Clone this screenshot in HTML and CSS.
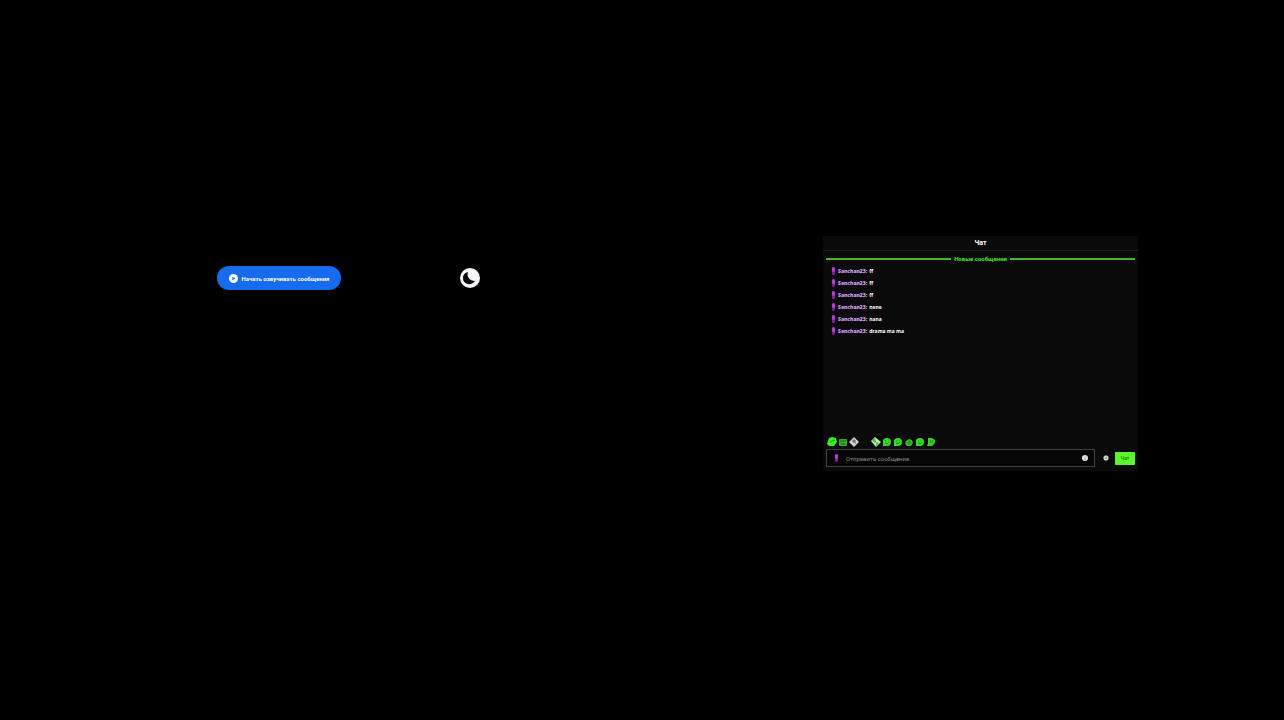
FILE: index.html
```html
<!DOCTYPE html>
<html lang="ru">
<head>
  <meta charset="UTF-8"/>
  <title>Чат</title>
  <meta name="viewport" content="width=device-width, initial-scale=1.0"/>
  <link rel="stylesheet" href="styles.css">
</head>
<body>
  <svg class="sprite" aria-hidden="true">
    <symbol id="mic" viewBox="0 0 6 10">
      <rect x="1" y="0" width="4" height="7" rx="2" fill="#b93ad6"/>
      <path d="M1 6h4v2L4 10H2L1 8z" fill="#7c1c9b"/>
    </symbol>
    <symbol id="blob" viewBox="0 0 10 10">
      <path d="M1 3Q2 1 5 1q4 0 4 4 0 4-4 4H1V6z" fill="#39d824"/>
      <path d="M3 4h1M6 3h1M3 6l2 1 2-2" stroke="#1f9417" fill="none"/>
    </symbol>
    <symbol id="pepe" viewBox="0 0 10 10">
      <path d="M2 1l3-1 4 1 1 4-3 4H2L0 7l1-3z" fill="#3bea22"/>
      <path d="M3 5l2-1 3-1" stroke="#1fa015" fill="none"/>
    </symbol>
    <symbol id="square" viewBox="0 0 10 10">
      <rect x="1" y="2" width="8" height="7" rx="1" fill="#2fae22"/>
      <path d="M2 4h6M3 7h4" stroke="#14700d" fill="none"/>
    </symbol>
    <symbol id="gem" viewBox="0 0 10 10">
      <path d="M5 0l5 5-5 5-5-5z" fill="#ccd4cc"/>
      <path d="M4 3h2v2H4zM6 6h1" stroke="#59625a" fill="none"/>
    </symbol>
    <symbol id="leaf" viewBox="0 0 10 10">
      <path d="M4 0l6 5-5 5-5-6z" fill="#c5e8c3"/>
      <path d="M1 3l3-2 1 4-1 1zM5 6l3-1-3 5z" fill="#31c332"/>
    </symbol>
    <symbol id="small" viewBox="0 0 10 10">
      <path d="M2 4l3-2 3 1 1 3-2 3H3L1 7z" fill="#32b927"/>
      <path d="M4 5h3M4 7h2" stroke="#1a8012" fill="none"/>
    </symbol>
    <symbol id="wave" viewBox="0 0 10 10">
      <path d="M2 1h4l3 2v3L6 9H1l1-3z" fill="#38d225"/>
      <path d="M4 3l1 3M7 3L6 6" stroke="#1f9417" fill="none"/>
    </symbol>
  </svg>

  <main class="page">
    <button class="speak" type="button">
      <svg class="speak-icon" viewBox="0 0 8 8" aria-hidden="true"><circle cx="4" cy="4" r="4" fill="#fff"/><path d="M3 2.500L5.500 4 3 5.500z" fill="#1769e8"/></svg>
      Начать озвучивать сообщения
    </button>

    <button class="theme" type="button" aria-label="Тёмная тема">
      <svg viewBox="0 0 20 20" aria-hidden="true"><circle cx="10" cy="10" r="10" fill="#f6f6f8"/><path d="M8 4C4 5 3 8 3 10c0 7 9 8 12 3-4 0-9-3-7-9z" fill="#08080c"/></svg>
    </button>

    <section class="chat">
      <h1 class="chat-title">Чат</h1>
      <p class="divider">Новые сообщения</p>
      <ul class="messages">
        <li><svg class="mic"><use href="#mic"/></svg><b>Sanchan23:</b> ff</li>
        <li><svg class="mic"><use href="#mic"/></svg><b>Sanchan23:</b> ff</li>
        <li><svg class="mic"><use href="#mic"/></svg><b>Sanchan23:</b> ff</li>
        <li><svg class="mic"><use href="#mic"/></svg><b>Sanchan23:</b> nene</li>
        <li><svg class="mic"><use href="#mic"/></svg><b>Sanchan23:</b> nana</li>
        <li><svg class="mic"><use href="#mic"/></svg><b>Sanchan23:</b> drama ma ma</li>
      </ul>
      <div class="emotes">
        <svg><use href="#pepe"/></svg>
        <svg><use href="#square"/></svg>
        <svg><use href="#gem"/></svg>
        <svg></svg>
        <svg><use href="#leaf"/></svg>
        <svg><use href="#blob"/></svg>
        <svg><use href="#blob"/></svg>
        <svg><use href="#small"/></svg>
        <svg><use href="#blob"/></svg>
        <svg><use href="#wave"/></svg>
      </div>
      <form class="composer">
        <div class="field">
          <svg class="mic"><use href="#mic"/></svg>
          <input class="text" type="text" placeholder="Отправить сообщение" aria-label="Отправить сообщение">
          <button class="icon" type="button" aria-label="Смайлы">
            <svg viewBox="0 0 6 6"><circle cx="3" cy="3" r="3" fill="#e4e4e4"/><path d="M2 2h.5M4 2h.5M2 4h2" stroke="#666" stroke-width=".6"/></svg>
          </button>
        </div>
        <div class="actions">
          <button class="icon" type="button" aria-label="Настройки">
            <svg viewBox="0 0 6 6"><path d="M2 .5h2L5.5 2v2L4 5.5H2L.5 4V2z" fill="#ddd"/><circle cx="3" cy="3" r="1" fill="#888"/></svg>
          </button>
          <button class="send" type="button">Чат</button>
        </div>
      </form>
    </section>
  </main>
</body>
</html>
```

FILE: styles.css
```css
body {
  margin: 0;
  background: #000;
  color: #fff;
  font-family: Roboto, "Liberation Sans", sans-serif;
  font-size: 6px;
}
button {
  border: 0;
  padding: 0;
  color: inherit;
  font: inherit;
  cursor: pointer;
}
svg {
  display: block;
}
.sprite {
  display: none;
}
.page {
  display: grid;
  grid-template-columns: 217fr 124px 119fr 20px 343fr 315px 146fr;
  align-items: start;
  padding-top: 236px;
}
.speak {
  grid-column: 2;
  display: flex;
  align-items: center;
  justify-content: center;
  gap: 4px;
  height: 24px;
  margin-top: 30px;
  border-radius: 12px;
  background: #176bef;
  font-weight: bold;
  white-space: nowrap;
}
.speak-icon {
  width: 9px;
  height: 9px;
}
.theme {
  grid-column: 4;
  height: 20px;
  margin-top: 32px;
  border-radius: 50%;
  background: none;
}
.theme svg {
  width: 20px;
  height: 20px;
}
.chat {
  grid-column: 6;
  display: flex;
  flex-direction: column;
  padding-bottom: 4px;
  background: #0a0a0b;
}
.chat-title {
  margin: 0;
  border-bottom: 1px solid #1b1b20;
  font-size: 7px;
  line-height: 14px;
  text-align: center;
}
.divider {
  display: flex;
  align-items: center;
  gap: 3px;
  margin: 4px 3px 2px;
  color: #4be92b;
  font-weight: bold;
  line-height: 8px;
}
.divider::before,
.divider::after {
  content: "";
  flex: 1;
  height: 2px;
  background: #43b629;
}
.messages {
  min-height: 172px;
  margin: 0;
  padding: 0 8px;
  list-style: none;
  font-family: "Open Sans", "Noto Sans", sans-serif;
  font-size: 5px;
}
.messages li {
  display: flex;
  align-items: center;
  gap: 2px;
  height: 12px;
  font-weight: bold;
}
.messages b {
  color: #d2a0f2;
}
.mic {
  flex: none;
  width: 5px;
  height: 8px;
}
.emotes {
  display: flex;
  gap: 1px;
  padding: 0 4px 2px;
}
.emotes svg {
  width: 10px;
  height: 10px;
}
.composer {
  display: flex;
  align-items: center;
  gap: 8px;
  padding: 0 3px;
}
.field {
  flex: 1;
  display: flex;
  align-items: center;
  gap: 7px;
  height: 16px;
  padding: 0 6px 0 7px;
  border: 1px solid #404044;
  background: #050506;
}
.text {
  flex: 1;
  min-width: 0;
  padding: 0;
  border: 0;
  background: none;
  color: #fff;
  font: inherit;
}
.text::placeholder {
  color: #8a8a8e;
}
.actions {
  display: flex;
  align-items: center;
  gap: 6px;
}
.icon {
  background: none;
}
.icon svg {
  width: 6px;
  height: 6px;
}
.send {
  width: 20px;
  height: 13px;
  border-radius: 1px;
  background: #5cf72b;
  color: #165c0b;
  font-size: 5px;
}
```
